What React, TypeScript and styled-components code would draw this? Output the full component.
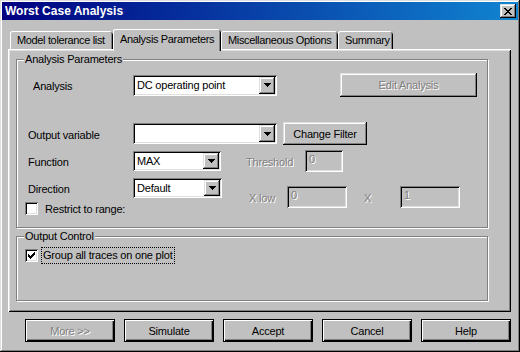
import React from 'react';
import styled, { createGlobalStyle, css } from 'styled-components';

const GlobalStyle = createGlobalStyle`
  html, body { margin: 0; padding: 0; background: #c0c0c0; }
  body {
    font-family: "Liberation Sans", Arial, sans-serif;
    font-size: 11px;
    letter-spacing: -0.2px;
    color: #000;
  }
`;

// 3d borders of the classic theme
const raised = css`
  box-shadow: inset -1px -1px #000, inset 1px 1px #dfdfdf, inset -2px -2px #808080, inset 2px 2px #fff;
`;
const sunken = css`
  box-shadow: inset 1px 1px #808080, inset -1px -1px #fff, inset 2px 2px #000, inset -2px -2px #dfdfdf;
`;
const disabledText = css`
  color: #808080;
  text-shadow: 1px 1px 0 #fff;
`;

const Window = styled.div`
  box-sizing: border-box;
  width: 520px;
  height: 352px;
  padding: 2px;
  background: #c0c0c0;
  display: flex;
  flex-direction: column;
  ${raised}
`;

const TitleBar = styled.div`
  height: 18px;
  display: flex;
  align-items: center;
  justify-content: space-between;
  padding: 0 2px 0 3px;
  background: linear-gradient(90deg, #000080, #1084d0);
  color: #fff;
  font-weight: bold;
  font-size: 12px;
  letter-spacing: 0;
`;

const CloseButton = styled.div`
  width: 16px;
  height: 14px;
  background: #c0c0c0;
  display: flex;
  align-items: center;
  justify-content: center;
  ${raised}
`;

const Body = styled.div`
  padding: 9px 7px 0 6px;
`;

// tabs
const TabStrip = styled.div`
  height: 20px;
  display: flex;
  align-items: flex-end;
  padding-left: 2px;
`;

const Tab = styled.div<{ $w: number; $active?: boolean }>`
  box-sizing: border-box;
  width: ${(p) => p.$w}px;
  height: ${(p) => (p.$active ? 22 : 18)}px;
  margin-bottom: ${(p) => (p.$active ? -2 : 0)}px;
  padding: 0 0 ${(p) => (p.$active ? 3 : 0)}px 7px;
  display: flex;
  align-items: center;
  background: #c0c0c0;
  border-radius: 3px 3px 0 0;
  position: relative;
  z-index: ${(p) => (p.$active ? 1 : 0)};
  white-space: nowrap;
  letter-spacing: -0.35px;
  box-shadow: inset 1px 0 #fff, inset 0 1px #fff, inset -1px 0 #000, inset -2px 0 #808080;
`;

const Panel = styled.div`
  box-sizing: border-box;
  width: 503px;
  height: 263px;
  padding: 4px 0 0 8px;
  box-shadow: inset 1px 1px #fff, inset -1px -1px #000, inset 2px 2px #dfdfdf, inset -2px -2px #808080;
`;

// group box
const Group = styled.fieldset<{ $mt?: number }>`
  box-sizing: border-box;
  width: 472px;
  min-width: 0;
  margin: ${(p) => p.$mt || 0}px 0 0 0;
  padding: 0;
  border: 1px solid #808080;
  box-shadow: inset 1px 1px #fff, 1px 1px #fff;
`;

const Legend = styled.legend`
  margin-left: 7px;
  padding: 0 1px;
  line-height: 13px;
  background: #c0c0c0;
`;

const GroupBody = styled.div<{ $h: number; $pt: number }>`
  box-sizing: border-box;
  height: ${(p) => p.$h}px;
  padding-top: ${(p) => p.$pt}px;
`;

const Row = styled.div<{ $h?: number; $mt?: number; $ml?: number }>`
  display: flex;
  align-items: center;
  height: ${(p) => (p.$h ? `${p.$h}px` : 'auto')};
  margin-top: ${(p) => p.$mt || 0}px;
  margin-left: ${(p) => p.$ml || 0}px;
`;

const Columns = styled.div`
  display: flex;
  margin-top: 5px;
  margin-left: 11px;
`;

const Column = styled.div<{ $ml?: number }>`
  display: flex;
  flex-direction: column;
  margin-left: ${(p) => p.$ml || 0}px;
`;

const Label = styled.span<{ $w?: number; $ml?: number; $disabled?: boolean }>`
  width: ${(p) => (p.$w ? `${p.$w}px` : 'auto')};
  margin-left: ${(p) => p.$ml || 0}px;
  padding-top: 2px;
  flex-shrink: 0;
  white-space: nowrap;
  ${(p) => p.$disabled && disabledText}
`;

const Combo = styled.div<{ $w: number; $h: number }>`
  box-sizing: border-box;
  width: ${(p) => p.$w}px;
  height: ${(p) => p.$h}px;
  padding: 2px;
  display: flex;
  background: #fff;
  ${sunken}
`;

const ComboText = styled.span`
  flex: 1;
  padding-left: 2px;
  display: flex;
  align-items: center;
  white-space: nowrap;
`;

const DropButton = styled.div`
  width: 16px;
  background: #c0c0c0;
  display: flex;
  align-items: center;
  justify-content: center;
  ${raised}
`;

const TextBox = styled.div<{ $w: number }>`
  box-sizing: border-box;
  width: ${(p) => p.$w}px;
  height: 22px;
  padding: 3px 0 0 4px;
  background: #c0c0c0;
  ${sunken}
  ${disabledText}
`;

const Button = styled.button<{ $w: number; $h?: number; $ml?: number; $framed?: boolean }>`
  box-sizing: border-box;
  width: ${(p) => p.$w}px;
  height: ${(p) => p.$h || 23}px;
  margin-left: ${(p) => p.$ml || 0}px;
  padding: 0;
  font-family: inherit;
  font-size: 11px;
  letter-spacing: -0.2px;
  color: #000;
  background: #c0c0c0;
  border: ${(p) => (p.$framed ? '1px solid #000' : 'none')};
  ${(p) =>
    p.$framed
      ? css`box-shadow: inset 1px 1px #fff, inset -1px -1px #000, inset -2px -2px #808080;`
      : raised}
  &:disabled {
    ${disabledText}
  }
`;

const CheckBox = styled.div`
  box-sizing: border-box;
  width: 13px;
  height: 13px;
  background: #fff;
  display: flex;
  align-items: center;
  justify-content: center;
  flex-shrink: 0;
  ${sunken}
`;

const FocusLabel = styled.span`
  margin-left: 3px;
  padding: 1px 1px 2px 1px;
  border: 1px dotted #000;
  white-space: nowrap;
`;

const ButtonRow = styled.div`
  width: 503px;
  margin-top: 7px;
  display: flex;
  justify-content: flex-end;
  gap: 9px;
`;

const Arrow = () => (
  <svg width="7" height="4" viewBox="0 0 7 4">
    <path d="M0 0h7v1H0zM1 1h5v1H1zM2 2h3v1H2zM3 3h1v1H3z" fill="#000" />
  </svg>
);

const CloseIcon = () => (
  <svg width="8" height="7" viewBox="0 0 8 7">
    <path
      d="M0 0h2v1H0zM6 0h2v1H6zM1 1h2v1H1zM5 1h2v1H5zM2 2h4v1H2zM3 3h2v1H3zM2 4h4v1H2zM1 5h2v1H1zM5 5h2v1H5zM0 6h2v1H0zM6 6h2v1H6z"
      fill="#000"
    />
  </svg>
);

const CheckMark = () => (
  <svg width="7" height="7" viewBox="0 0 7 7">
    <path
      d="M6 0h1v1H6zM5 1h2v1H5zM0 2h1v1H0zM4 2h3v1H4zM0 3h2v1H0zM3 3h3v1H3zM0 4h5v1H0zM1 5h3v1H1zM2 6h1v1H2z"
      fill="#000"
    />
  </svg>
);

type ComboPropsType = {
  value: string;
  w: number;
  h: number;
};

const ComboBox = (props: ComboPropsType) => (
  <Combo $w={props.w} $h={props.h}>
    <ComboText>{props.value}</ComboText>
    <DropButton>
      <Arrow />
    </DropButton>
  </Combo>
);

export default function App() {
  return (
    <>
      <GlobalStyle />
      <Window>
        <TitleBar>
          <span>Worst Case Analysis</span>
          <CloseButton>
            <CloseIcon />
          </CloseButton>
        </TitleBar>
        <Body>
          <TabStrip>
            <Tab $w={103}>Model tolerance list</Tab>
            <Tab $w={108} $active>Analysis Parameters</Tab>
            <Tab $w={117}>Miscellaneous Options</Tab>
            <Tab $w={55}>Summary</Tab>
          </TabStrip>
          <Panel>
            <Group>
              <Legend>Analysis Parameters</Legend>
              <GroupBody $h={161} $pt={7}>
                <Row $h={24} $ml={16}>
                  <Label $w={100}>Analysis</Label>
                  <ComboBox value="DC operating point" w={144} h={21} />
                  <Button $w={137} $h={24} $ml={63} disabled>
                    Edit Analysis
                  </Button>
                </Row>
                <Row $h={23} $mt={25} $ml={11}>
                  <Label $w={105}>Output variable</Label>
                  <ComboBox value="" w={144} h={21} />
                  <Button $w={84} $ml={6}>
                    Change Filter
                  </Button>
                </Row>
                <Columns>
                  <Column>
                    <Row $h={22}>
                      <Label $w={105}>Function</Label>
                      <ComboBox value="MAX" w={88} h={20} />
                    </Row>
                    <Row $h={20} $mt={6}>
                      <Label $w={105}>Direction</Label>
                      <ComboBox value="Default" w={89} h={20} />
                    </Row>
                    <Row $h={14} $mt={3} $ml={-3}>
                      <CheckBox />
                      <Label $ml={7}>Restrict to range:</Label>
                    </Row>
                  </Column>
                  <Column $ml={24}>
                    <Row $h={22}>
                      <Label $w={59} $disabled>Threshold</Label>
                      <TextBox $w={38}>0</TextBox>
                    </Row>
                    <Row $h={22} $mt={14} $ml={3}>
                      <Label $w={38} $disabled>X low</Label>
                      <TextBox $w={60}>0</TextBox>
                      <Label $w={36} $ml={17} $disabled>X</Label>
                      <TextBox $w={60}>1</TextBox>
                    </Row>
                  </Column>
                </Columns>
              </GroupBody>
            </Group>
            <Group $mt={2}>
              <Legend>Output Control</Legend>
              <GroupBody $h={57} $pt={4}>
                <Row $ml={8}>
                  <CheckBox>
                    <CheckMark />
                  </CheckBox>
                  <FocusLabel>Group all traces on one plot</FocusLabel>
                </Row>
              </GroupBody>
            </Group>
          </Panel>
          <ButtonRow>
            <Button $w={90} $framed disabled>
              More &gt;&gt;
            </Button>
            <Button $w={90} $framed>Simulate</Button>
            <Button $w={90} $framed>Accept</Button>
            <Button $w={90} $framed>Cancel</Button>
            <Button $w={90} $framed>Help</Button>
          </ButtonRow>
        </Body>
      </Window>
    </>
  );
}
